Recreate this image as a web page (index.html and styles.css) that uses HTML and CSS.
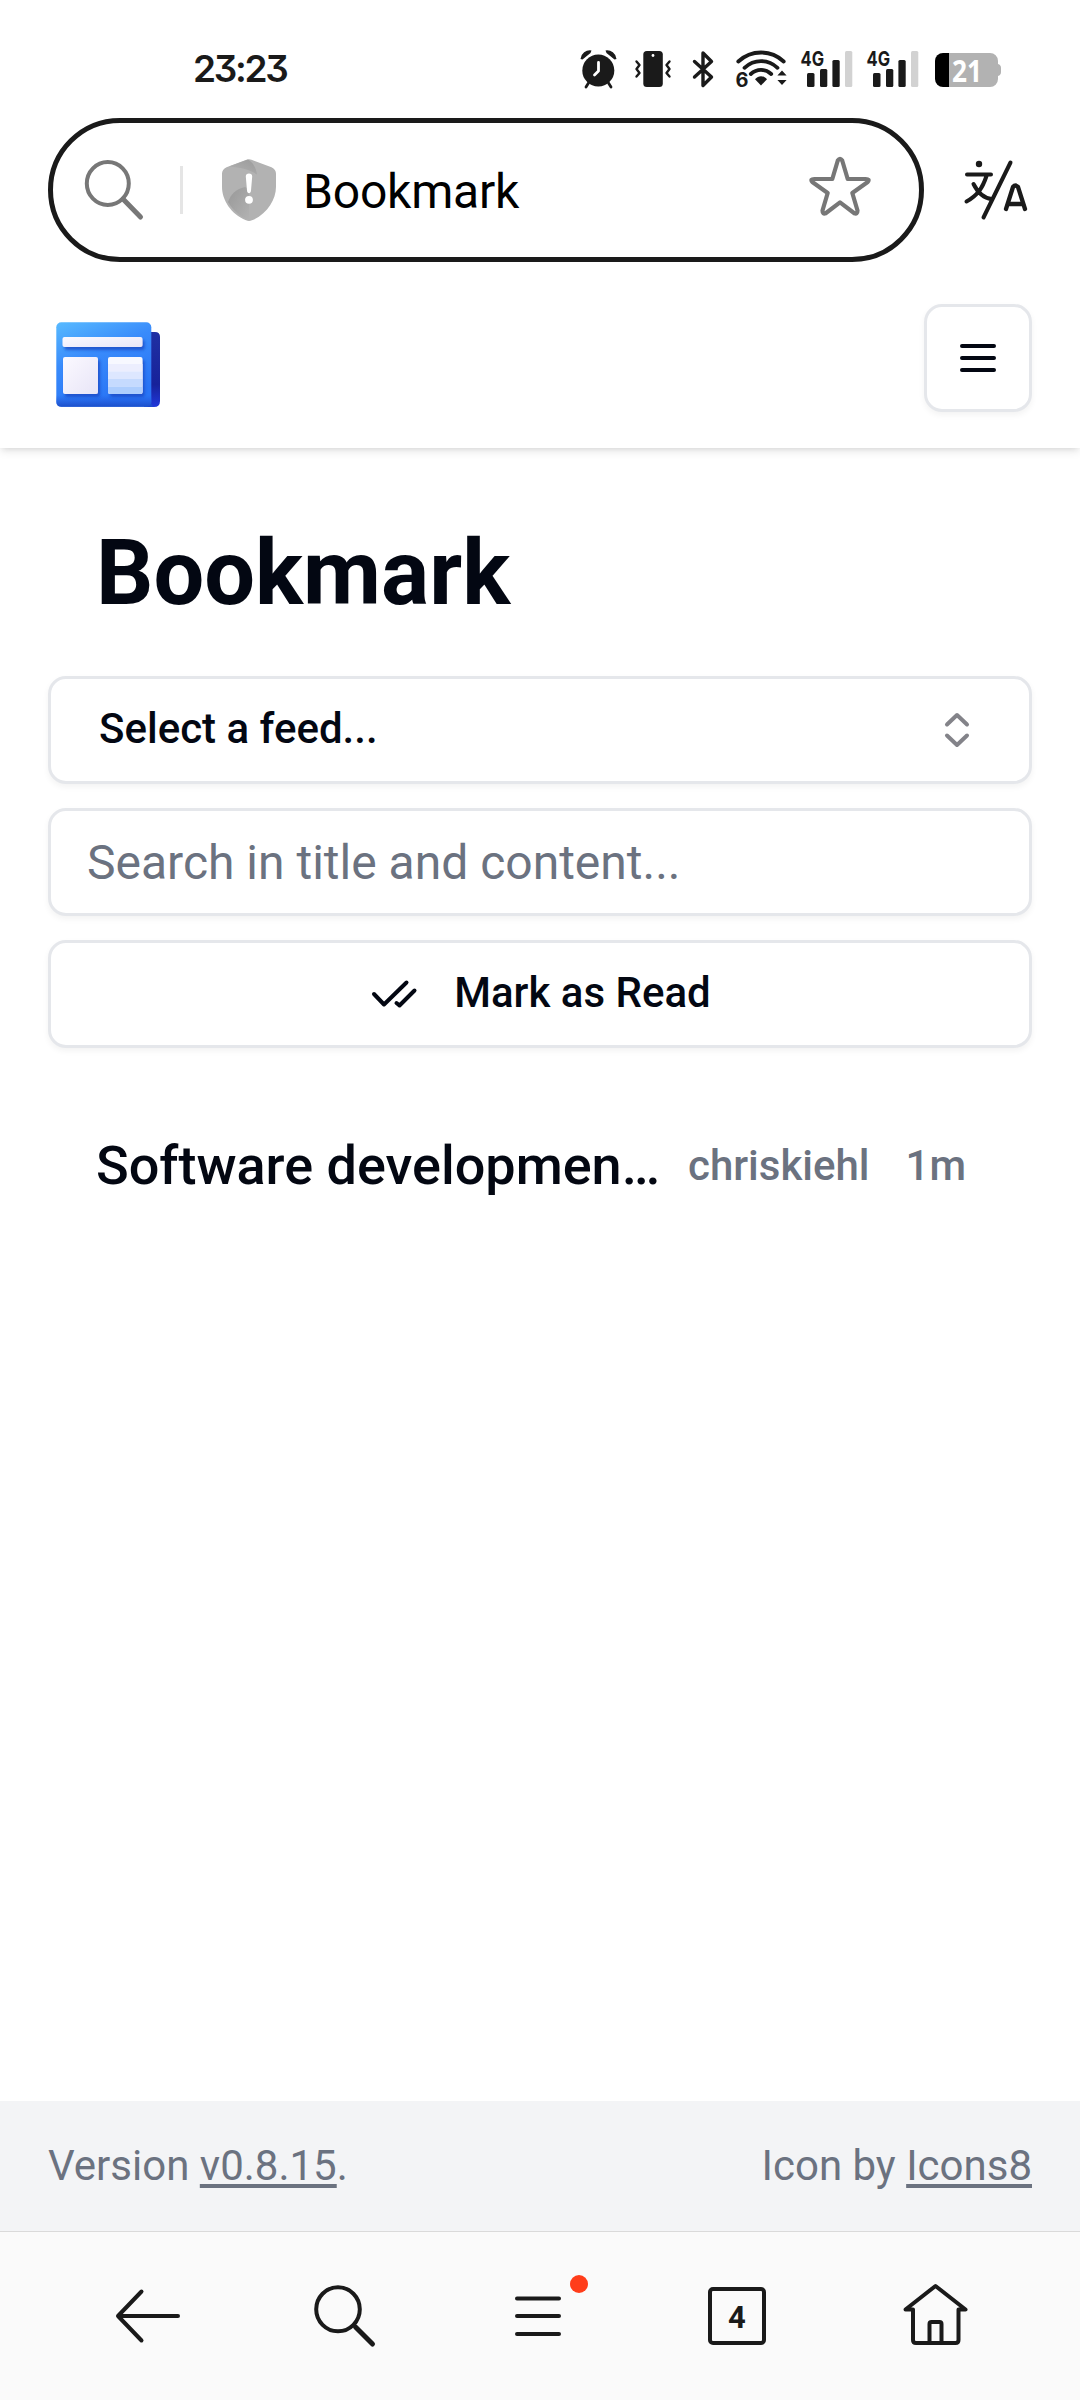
FILE: index.html
```html
<!DOCTYPE html>
<html lang="en">
<head>
<meta charset="utf-8">
<title>Bookmark</title>
<link rel="stylesheet" href="styles.css">
</head>
<body>
<div class="statusbar">
  <div class="clock">23:23</div>
  <div class="indicators">
    <svg class="alarm" width="38" height="40" viewBox="580 49 38 40">
      <g fill="#1a1a1a"><circle cx="598.3" cy="70.5" r="16"/>
      <path d="M580.5 59a9.500 9.500 0 0 1 11-8.500l-1 2.500-8 6.500zM616.500 59a9.500 9.500 0 0 0-11-8.500l1 2.500 8 6.500z"/></g>
      <path d="M588.500 83l-2.500 4M608.500 83l2.500 4" stroke="#1a1a1a" stroke-width="2.800" stroke-linecap="round"/>
      <path d="M598.500 62.500v8.500l-4 4" fill="none" stroke="#fff" stroke-width="2.800" stroke-linecap="round" stroke-linejoin="round"/>
    </svg>
    <svg class="vibrate" width="38" height="38" viewBox="634 50 38 38">
      <rect x="643.300" y="51" width="19.500" height="36" rx="3.500" fill="#1a1a1a"/><circle cx="653" cy="55.500" r="1.400" fill="#fff"/>
      <path d="M636.500 61.500l3 3.500-3 4 3 4-3 3.500M669.500 61.500l-3 3.500 3 4-3 4 3 3.500" fill="none" stroke="#1a1a1a" stroke-width="2.400" stroke-linecap="round" stroke-linejoin="round"/>
    </svg>
    <svg class="bluetooth" width="23" height="38" viewBox="692 50 23 38">
      <path d="M694.500 61.500l17 15.500-8.500 8.500v-32.500l8.500 8.500-17 15.500" fill="none" stroke="#1a1a1a" stroke-width="3.400" stroke-linecap="round" stroke-linejoin="round"/>
    </svg>
    <svg class="wifi" width="54" height="40" viewBox="735 50 54 40">
      <g fill="none" stroke="#1a1a1a" stroke-width="3.800" stroke-linecap="round"><path d="M738.300 62.500c13-12 32.500-12 45.400 0"/><path d="M744.500 68.800c9.500-9 23.500-9 33 0"/><path d="M750.800 75c6-5.500 14.400-5.500 20.400 0"/></g>
      <path d="M755 80.200c3.500-4 8.500-4 12 0l-6 6.300z" fill="#1a1a1a"/>
      <path d="M782 71.500l4.600 5h-9.200zM782 86l4.600-5h-9.200z" fill="#1a1a1a"/>
      <text class="micro" x="735.500" y="87.500" font-size="20">6</text>
    </svg>
    <svg class="signal" width="52" height="38" viewBox="801 50 52 38">
      <text class="micro" x="800.500" y="65.500" font-size="20.500" textLength="23.500" lengthAdjust="spacingAndGlyphs">4G</text>
      <g fill="#1a1a1a"><rect x="807" y="73" width="7.500" height="14" rx="1.500"/><rect x="820" y="69" width="7.300" height="18" rx="1.500"/><rect x="832.400" y="60" width="7.300" height="27" rx="1.500"/></g>
      <rect x="845" y="51" width="7.300" height="36" rx="1.500" fill="#d2d2d2"/>
    </svg>
    <svg class="signal" width="52" height="38" viewBox="801 50 52 38">
      <text class="micro" x="800.500" y="65.500" font-size="20.500" textLength="23.500" lengthAdjust="spacingAndGlyphs">4G</text>
      <g fill="#1a1a1a"><rect x="807" y="73" width="7.500" height="14" rx="1.500"/><rect x="820" y="69" width="7.300" height="18" rx="1.500"/><rect x="832.400" y="60" width="7.300" height="27" rx="1.500"/></g>
      <rect x="845" y="51" width="7.300" height="36" rx="1.500" fill="#d2d2d2"/>
    </svg>
    <svg class="battery" width="66" height="34" viewBox="935 53 66 34">
      <path d="M949 53h41a8 8 0 0 1 8 8v3c2 .5 3 2 3 4v4c0 2-1 3.500-3 4v3a8 8 0 0 1-8 8h-41z" fill="#b2b2b2"/>
      <path d="M949 53v34h-6a8 8 0 0 1-8-8v-18a8 8 0 0 1 8-8z" fill="#000"/>
      <text class="charge" x="952" y="81.500" textLength="30" lengthAdjust="spacingAndGlyphs">21</text>
    </svg>
  </div>
</div>

<div class="urlrow">
  <div class="urlbar">
    <svg class="find" width="60" height="62" viewBox="84 160 60 62" fill="none" stroke="#777"><ellipse cx="107.800" cy="184.500" rx="21" ry="21.500" stroke-width="4"/><path d="M123 200l17.500 18" stroke-width="5" stroke-linecap="round"/></svg>
    <span class="divider"></span>
    <svg class="shield" width="54" height="62" viewBox="222 159 54 62">
      <defs>
        <linearGradient id="shade" x1="0" y1="1" x2="1" y2="0"><stop offset="0" stop-color="#b2b2b2"/><stop offset="1" stop-color="#9b9b9b"/></linearGradient>
        <linearGradient id="shade2" x1="0" y1="0" x2="1" y2="1"><stop offset="0" stop-color="#989898"/><stop offset="1" stop-color="#b2b2b2"/></linearGradient>
      </defs>
      <path d="M246.500 159.800q2.500-1 5 0l20 7.500q4.500 2 4.500 6.500v13c0 13-9 27.500-24 33.500q-3 1.200-6 0c-15-6-24-20.500-24-33.500v-13q0-4.500 4.500-6.500z" fill="#b2b2b2"/>
      <path d="M248 159.500c5 3 8 8 9 15-7-5-17-7-28-8z" fill="url(#shade)"/>
      <path d="M228 202c3-8 8-13 17-15l4 2v31c-10-4-16-10-21-18z" fill="url(#shade2)"/>
      <path d="M249 173.500c2 0 3.300 1.200 3.200 3l-1.200 14c-.2 3.500-3.800 3.500-4 0l-1.200-14c-.1-1.800 1.200-3 3.200-3z" fill="#fff"/><circle cx="249" cy="199.800" r="3.900" fill="#fff"/>
    </svg>
    <span class="address">Bookmark</span>
    <svg class="star" width="64" height="62" viewBox="808 155 64 62"><path d="M837.800 160.500q2.200-3.400 4.400 0L847.700 179h18q4.500 0 2 3L852.300 193l5.200 17.500q0 4-3.200 2.700L840 202.400l-14.300 10.800q-3.200 1.300-3.200-2.700l5.200-17.500L812.300 182q-2.500-3 2-3H832.300z" fill="none" stroke="#777" stroke-width="4.200" stroke-linejoin="round"/></svg>
  </div>
  <svg class="translate" width="66" height="62" viewBox="963 159 66 62" fill="none" stroke="#1a1a1a" stroke-width="4" stroke-linecap="round" stroke-linejoin="round">
    <circle cx="979" cy="164" r="3.200" fill="#1a1a1a" stroke="none"/><path d="M967 174.500h24M986.500 176c-4 12-9 19.500-20 25.500M973.500 184c4 8 9 14 18 15M1010.500 162.500L983.500 217.500"/><path d="M1006 209l7-22q2.500-3 5 0l7 22M1009 204h13" stroke-width="4.300"/>
  </svg>
</div>

<header class="header">
  <svg class="logo" width="106" height="88" viewBox="55 321 106 88">
    <defs>
      <linearGradient id="page" x1="0" y1="0" x2=".45" y2="1"><stop offset="0" stop-color="#58baff"/><stop offset=".45" stop-color="#398bfb"/><stop offset="1" stop-color="#2874f5"/></linearGradient>
      <linearGradient id="back" x1="0" y1="0" x2="0" y2="1"><stop offset="0" stop-color="#2030a3"/><stop offset=".7" stop-color="#17229a"/><stop offset="1" stop-color="#2038db"/></linearGradient>
      <linearGradient id="foot" x1="0" y1="0" x2="0" y2="1"><stop offset="0" stop-color="#2458dc" stop-opacity="0"/><stop offset="1" stop-color="#1c4fc9"/></linearGradient>
      <linearGradient id="panel" x1="0" y1="0" x2="1" y2="1"><stop offset="0" stop-color="#fbf9ff"/><stop offset="1" stop-color="#e8e5f7"/></linearGradient>
      <filter id="drop" x="-20%" y="-20%" width="150%" height="160%"><feDropShadow dx="2" dy="3" stdDeviation="1.800" flood-color="#1646c4" flood-opacity=".8"/></filter>
    </defs>
    <path d="M148 332h7q5 0 5 5v64q0 6-6 6h-10z" fill="url(#back)"/>
    <rect x="56.300" y="322.300" width="95" height="84.500" rx="5" fill="url(#page)"/>
    <path d="M56.300 395h95v7q0 4.800 3 4.800h-93q-5 0-5-5z" fill="url(#foot)"/>
    <g filter="url(#drop)"><rect x="62.500" y="337" width="80" height="10" rx="2" fill="url(#panel)"/><rect x="63" y="357" width="35" height="37" rx="2" fill="url(#panel)"/><rect x="108" y="357" width="34.500" height="37" rx="2" fill="#f7f8ff"/></g>
    <path d="M108 364h34.500v7.500H108z" fill="#eceefe"/><path d="M108 371.500h34.500v7.500H108z" fill="#dde7ff"/><path d="M108 379h34.500v7.500H108z" fill="#c5dafe"/><path d="M108 386.500h34.500v5.500q0 2-2 2H110q-2 0-2-2z" fill="#adcdfd"/>
  </svg>
  <button class="menu" aria-label="Menu"><svg width="36" height="28" viewBox="0 0 36 28" stroke="#030712" stroke-width="4" stroke-linecap="round"><path d="M2 2h32M2 14h32M2 26h32"/></svg></button>
</header>

<main class="main">
  <h1 class="title">Bookmark</h1>
  <div class="controls">
    <button class="control select"><span>Select a feed...</span>
      <svg width="26" height="36" viewBox="0 0 26 36" fill="none" stroke="#838389" stroke-width="4" stroke-linecap="round" stroke-linejoin="round"><path d="M3 12.500L13 3l10 9.500M3 23.500L13 33l10-9.500"/></svg>
    </button>
    <input class="control search" type="text" placeholder="Search in title and content...">
    <button class="control mark">
      <svg width="46" height="29" viewBox="371 980 46 29" fill="none" stroke="#030712" stroke-width="4" stroke-linecap="round" stroke-linejoin="round"><path d="M374 994l10 10.500L406.500 982.500M396.500 1003l3 2.500L414.500 990.500"/></svg>
      <span>Mark as Read</span>
    </button>
  </div>
  <article class="entry">
    <h2 class="entry-title">Software developmen…</h2>
    <span class="meta">chriskiehl</span>
    <span class="meta age">1m</span>
  </article>
</main>

<footer class="footer">
  <span>Version <a>v0.8.15</a>.</span>
  <span>Icon by <a>Icons8</a></span>
</footer>

<nav class="navbar">
  <svg width="68" height="64" viewBox="113 2284 68 64"><path d="M141.500 2291.500L118 2316l23.500 24.500M118 2316h60"/></svg>
  <svg class="nav-search" width="64" height="64" viewBox="312 2284 64 64"><ellipse cx="338" cy="2309.300" rx="21.800" ry="22"/><path d="M355.500 2327l17 17" stroke-width="5"/></svg>
  <span class="nav-menu"><svg width="48" height="64" viewBox="514 2284 48 64"><path d="M517 2298.500h42M517 2316h42M517 2334h42"/></svg><i class="dot"></i></span>
  <svg class="nav-tabs" width="60" height="64" viewBox="707 2284 60 64"><rect x="710" y="2289" width="54" height="54" rx="3"/><text class="tabs" x="737" y="2327.500">4</text></svg>
  <svg class="nav-home" width="68" height="64" viewBox="902 2284 68 64"><path d="M913 2309.500h-7.500L935.500 2286l30 23.500H958.500V2340q0 3-3 3H916q-3 0-3-3zM929.500 2343v-19q0-2 2-2h8q2 0 2 2v19"/></svg>
</nav>
</body>
</html>
```
FILE: styles.css
```css
* { box-sizing: border-box; }
body {
  margin: 0;
  width: 1080px;
  height: 2400px;
  display: flex;
  flex-direction: column;
  overflow: hidden;
  background: #fff;
  color: #030712;
  font-family: Roboto, "Liberation Sans", sans-serif;
}
svg { display: block; flex: none; overflow: visible; }
button, input { font: inherit; color: inherit; margin: 0; padding: 0; }

/* Status bar */
.statusbar {
  height: 118px;
  flex: none;
  padding: 20px 79px 0 193px;
  display: flex;
  align-items: center;
  justify-content: space-between;
  color: #1a1a1a;
}
.clock {
  font: 600 37px/40px Inter, sans-serif;
  font-feature-settings: "cv09";
  letter-spacing: -2.3px;
}
.indicators { display: flex; align-items: center; }
.vibrate { margin-left: 16px; }
.bluetooth { margin-left: 20px; }
.wifi { margin-left: 20px; }
.signal { margin-left: 12px; }
.signal + .signal { margin-left: 14px; }
.battery { margin: 2px 0 0 16px; }
.micro { font-family: Inter, sans-serif; font-weight: 700; fill: #1a1a1a; }
.charge { font: 700 30px "Open Sans", sans-serif; fill: #fff; }

/* Address row */
.urlrow {
  position: relative;
  z-index: 1;
  flex: none;
  display: flex;
  align-items: center;
  height: 144px;
  padding-left: 48px;
  background: #fff;
}
.urlbar {
  width: 876px;
  height: 144px;
  border: 5px solid #1a1a1a;
  border-radius: 72px;
  display: flex;
  align-items: center;
  padding: 0 47px 0 31px;
}
.divider { width: 3px; height: 48px; margin-left: 36px; background: #e5e5e5; }
.shield { margin-left: 39px; }
.address { flex: 1; margin-left: 27px; font-size: 48px; letter-spacing: -.2px; line-height: 56px; color: #000; padding-top: 4px; }
.star { margin-top: -8px; }
.translate { margin-left: 39px; }

/* Page header */
.header {
  height: 186px;
  flex: none;
  display: flex;
  justify-content: space-between;
  padding: 42px 48px 36px 55px;
  box-shadow: 0 3px 9px rgba(0,0,0,.1), 0 3px 6px -3px rgba(0,0,0,.1);
}
.logo { margin-top: 17px; }
.menu {
  width: 108px;
  height: 108px;
  display: flex;
  align-items: center;
  justify-content: center;
  background: #fff;
  border: 3px solid #e5e7eb;
  border-radius: 18px;
  box-shadow: 0 3px 6px rgba(0,0,0,.05);
}

/* Content */
.main { flex: 1; padding: 72px 48px 0; }
.title { margin: 0 48px; font-size: 90px; font-weight: 700; line-height: 108px; }
.controls { display: flex; flex-direction: column; gap: 24px; margin-top: 48px; }
.control {
  width: 100%;
  height: 108px;
  display: flex;
  align-items: center;
  border: 3px solid #e5e7eb;
  border-radius: 18px;
  background: #fff;
  box-shadow: 0 3px 6px rgba(0,0,0,.05);
  font-size: 42px;
  font-weight: 500;
  line-height: 60px;
}
.select { justify-content: space-between; padding: 0 59px 0 48px; }
.select span, .mark span { margin-top: -3px; }
.search { padding: 0 36px; font-size: 48px; font-weight: 400; }
.search::placeholder { color: #6b7280; opacity: 1; }
.mark { justify-content: center; gap: 37px; padding-left: 2px; }
.entry { display: flex; align-items: center; margin: 82px 48px 0; height: 72px; }
.entry-title {
  width: 565px;
  margin: 0;
  white-space: nowrap;
  font-size: 54px;
  font-weight: 500;
  line-height: 72px;
}
.meta { margin-left: 27px; font-size: 42px; font-weight: 500; line-height: 60px; color: #6b7280; }
.age { margin-left: 36px; }

/* Footer */
.footer {
  height: 130px;
  flex: none;
  display: flex;
  align-items: center;
  justify-content: space-between;
  padding: 0 48px;
  background: #f3f4f6;
  color: #6b7280;
  font-size: 42px;
  line-height: 60px;
}
.footer a { text-decoration: underline; text-decoration-thickness: 4px; text-underline-offset: 4px; text-decoration-skip-ink: none; }

/* Browser toolbar */
.navbar {
  height: 169px;
  flex: none;
  display: flex;
  padding: 52px 0 0 113px;
  border-top: 1px solid #dadada;
  background: #fafafa;
}
.navbar svg { fill: none; stroke: #1a1a1a; stroke-width: 4px; stroke-linecap: round; stroke-linejoin: round; }
.navbar .tabs { font: 700 31px Roboto, sans-serif; fill: #1a1a1a; stroke: none; text-anchor: middle; }
.nav-search { margin-left: 131px; }
.nav-menu { position: relative; margin-left: 138px; }
.nav-tabs { margin-left: 145px; }
.nav-home { margin-left: 135px; }
.dot { position: absolute; left: 56px; top: -9px; width: 18px; height: 18px; border-radius: 50%; background: #ff3d1a; }
```
